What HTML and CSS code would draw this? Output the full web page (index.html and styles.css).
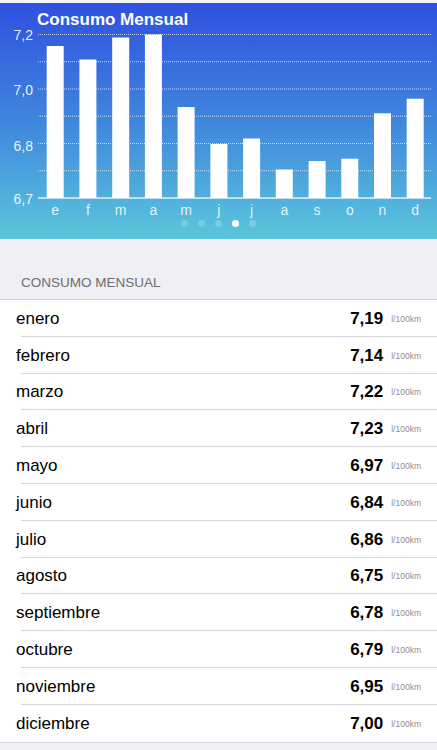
FILE: index.html
```html
<!doctype html>
<html lang="es">

<head>
  <title>Consumo Mensual</title>
  <meta charset="utf-8" />
  <link rel="stylesheet" href="styles.css">
</head>

<body>
  <div class="status-strip"></div>
  <header class="chart-card">
    <div class="chart-title">Consumo Mensual</div>
    <svg class="chart" width="437" height="188" viewBox="0 30 437 188">
      <g class="grid">
        <line x1="38" y1="34.5" x2="431" y2="34.5" />
        <line x1="38" y1="61.75" x2="431" y2="61.75" />
        <line x1="38" y1="89" x2="431" y2="89" />
        <line x1="38" y1="116.25" x2="431" y2="116.25" />
        <line x1="38" y1="143.5" x2="431" y2="143.5" />
        <line x1="38" y1="170.75" x2="431" y2="170.75" />
      </g>
      <g class="y-labels">
        <text x="13.5" y="40">7,2</text>
        <text x="13.5" y="95">7,0</text>
        <text x="13.5" y="150.5">6,8</text>
        <text x="13.5" y="204">6,7</text>
      </g>
      <g class="bars">
        <rect x="46.7" y="46" width="17" height="152" />
        <rect x="79.4" y="59.5" width="17" height="138.5" />
        <rect x="112.2" y="37.5" width="17" height="160.5" />
        <rect x="144.9" y="34.5" width="17" height="163.5" />
        <rect x="177.6" y="107" width="17" height="91" />
        <rect x="210.4" y="144" width="17" height="54" />
        <rect x="243.1" y="138.5" width="17" height="59.5" />
        <rect x="275.8" y="169.5" width="17" height="28.5" />
        <rect x="308.6" y="161" width="17" height="37" />
        <rect x="341.3" y="158.7" width="17" height="39.3" />
        <rect x="374" y="113.3" width="17" height="84.7" />
        <rect x="406.7" y="98.7" width="17" height="99.3" />
      </g>
      <line class="axis" x1="38" y1="198" x2="431" y2="198" />
      <g class="x-labels">
        <text x="55.2" y="214.5">e</text>
        <text x="87.9" y="214.5">f</text>
        <text x="120.7" y="214.5">m</text>
        <text x="153.4" y="214.5">a</text>
        <text x="186.1" y="214.5">m</text>
        <text x="218.9" y="214.5">j</text>
        <text x="251.6" y="214.5">j</text>
        <text x="284.3" y="214.5">a</text>
        <text x="317.1" y="214.5">s</text>
        <text x="349.8" y="214.5">o</text>
        <text x="382.5" y="214.5">n</text>
        <text x="415.2" y="214.5">d</text>
      </g>
    </svg>
    <div class="pager">
      <span class="dot"></span>
      <span class="dot"></span>
      <span class="dot"></span>
      <span class="dot active"></span>
      <span class="dot"></span>
    </div>
  </header>

  <div class="section-title">CONSUMO MENSUAL</div>
  <ul class="months">
    <li class="row"><span class="name">enero</span><span class="value">7,19</span><span class="unit">l/100km</span></li>
    <li class="row"><span class="name">febrero</span><span class="value">7,14</span><span class="unit">l/100km</span></li>
    <li class="row"><span class="name">marzo</span><span class="value">7,22</span><span class="unit">l/100km</span></li>
    <li class="row"><span class="name">abril</span><span class="value">7,23</span><span class="unit">l/100km</span></li>
    <li class="row"><span class="name">mayo</span><span class="value">6,97</span><span class="unit">l/100km</span></li>
    <li class="row"><span class="name">junio</span><span class="value">6,84</span><span class="unit">l/100km</span></li>
    <li class="row"><span class="name">julio</span><span class="value">6,86</span><span class="unit">l/100km</span></li>
    <li class="row"><span class="name">agosto</span><span class="value">6,75</span><span class="unit">l/100km</span></li>
    <li class="row"><span class="name">septiembre</span><span class="value">6,78</span><span class="unit">l/100km</span></li>
    <li class="row"><span class="name">octubre</span><span class="value">6,79</span><span class="unit">l/100km</span></li>
    <li class="row"><span class="name">noviembre</span><span class="value">6,95</span><span class="unit">l/100km</span></li>
    <li class="row"><span class="name">diciembre</span><span class="value">7,00</span><span class="unit">l/100km</span></li>
  </ul>
</body>

</html>
```

FILE: styles.css
```css
html {
  font-family: "Liberation Sans", Arial, sans-serif;
}

body {
  margin: 0;
  background-color: #efeff4;
}

.status-strip {
  height: 3px;
  background-color: #f6f6f9;
}

.chart-card {
  height: 237px;
  padding-top: 7px;
  box-sizing: border-box;
  background: linear-gradient(to bottom, #2f50e0 0%, #3f86dc 50%, #5bc6dc 100%);
  border-bottom: 1px solid #e4ecf6;
}

.chart-title {
  padding-left: 37px;
  font-size: 17px;
  font-weight: bold;
  line-height: 20px;
  color: #fff;
}

.chart {
  display: block;
  overflow: visible;
}

.grid line {
  stroke: rgba(255, 255, 255, 0.7);
  stroke-width: 1;
  stroke-dasharray: 1 1;
}

.axis {
  stroke: rgba(255, 255, 255, 0.85);
  stroke-width: 1.5;
}

.bars rect {
  fill: #fff;
}

.y-labels text {
  font-size: 14px;
  fill: rgba(255, 255, 255, 0.9);
}

.x-labels text {
  font-size: 14px;
  text-anchor: middle;
  fill: rgba(255, 255, 255, 0.85);
}

.pager {
  display: flex;
  justify-content: center;
  gap: 10px;
  margin-top: 2px;
}

.dot {
  width: 7px;
  height: 7px;
  border-radius: 50%;
  background-color: rgba(255, 255, 255, 0.22);
}

.dot.active {
  background-color: #fff;
}

.section-title {
  padding: 35px 21px 8px;
  font-size: 13.5px;
  line-height: 16px;
  color: #6d6d72;
}

.months {
  list-style: none;
  margin: 0;
  padding: 0;
  background-color: #fff;
  border-top: 1px solid #d6d6da;
  border-bottom: 1px solid #d6d6da;
}

.row {
  display: flex;
  align-items: center;
  height: 36.8px;
  padding: 1px 16px 0;
  box-sizing: border-box;
  background: linear-gradient(#d6d6da, #d6d6da) no-repeat 21px 100% / calc(100% - 21px) 1px;
}

.row:last-child {
  background: none;
}

.name {
  flex: 1;
  font-size: 17px;
  color: #000;
}

.value {
  font-size: 17px;
  font-weight: bold;
  color: #000;
}

.unit {
  margin-left: 8px;
  font-size: 8.5px;
  color: #8e8e93;
}
```
